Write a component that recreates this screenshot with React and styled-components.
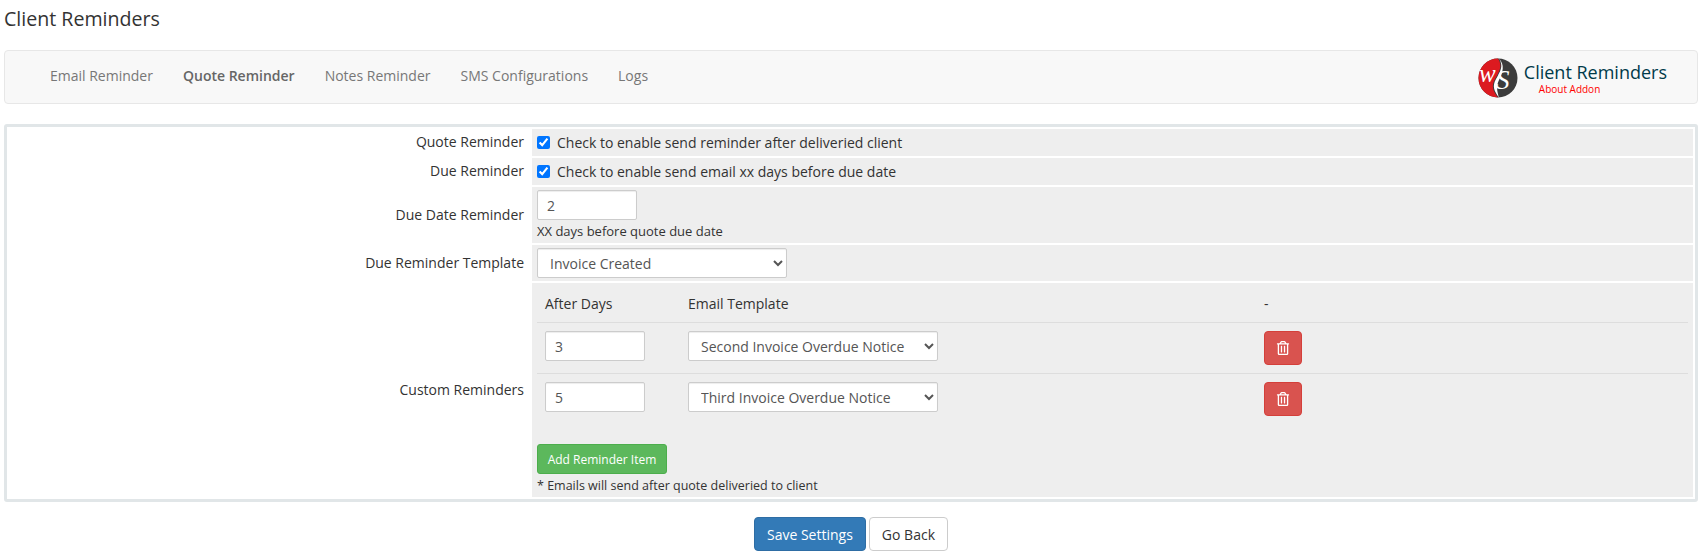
import React from "react"
import styled, { createGlobalStyle } from "styled-components"
import { FaRegTrashAlt } from "react-icons/fa"

const GlobalStyle = createGlobalStyle`
  html, body {
    margin: 0;
    padding: 0;
    background: #fff;
    font-family: "Open Sans", "Liberation Sans", sans-serif;
    font-size: 14px;
    color: #333;
  }
  * { box-sizing: border-box; }
`

const Page = styled.div`
  padding: 0 4px;
`

const Title = styled.h1`
  margin: 0;
  padding-top: 5px;
  height: 50px;
  font-size: 19.6px;
  line-height: 28px;
  font-weight: 400;
  color: #333;
`

const Navbar = styled.div`
  display: flex;
  align-items: center;
  justify-content: space-between;
  height: 54px;
  padding: 0 30px;
  background: #f8f8f8;
  border: 1px solid #e7e7e7;
  border-radius: 4px;
`

const NavList = styled.div`
  display: flex;
  padding-bottom: 2px;
`

const NavItem = styled.a`
  padding: 0 15px;
  font-size: 14px;
  line-height: 20px;
  color: ${p => (p.$active ? "#666" : "#777")};
  font-weight: ${p => (p.$active ? 600 : 400)};
`

const Brand = styled.div`
  display: flex;
  align-items: center;
  gap: 6px;
  padding-top: 1px;
`

const BrandText = styled.div`
  display: flex;
  flex-direction: column;
  padding-bottom: 1px;
`

const BrandName = styled.span`
  margin-bottom: 1px;
  font-size: 18px;
  line-height: 22px;
  color: #003b4a;
`

const BrandLink = styled.span`
  margin-left: 15px;
  font-size: 10px;
  line-height: 10px;
  color: #f00;
`

const Panel = styled.div`
  display: flex;
  flex-direction: column;
  gap: 2px;
  margin-top: 20px;
  padding: 2px;
  border: 3px solid #e1e6e8;
  border-radius: 3px;
`

const Row = styled.div`
  display: grid;
  grid-template-columns: 523px 1fr;
`

const Label = styled.div`
  display: flex;
  align-items: center;
  justify-content: flex-end;
  padding: 0 8px 2px 0;
  font-size: 14px;
  color: #333;
`

const Field = styled.div`
  background: #eee;
  padding: 3px 5px;
`

const CheckLine = styled.label`
  display: flex;
  align-items: center;
  gap: 7px;
  height: 21px;
  font-size: 14px;
  color: #333;
`

const Check = styled.input`
  margin: 0;
  width: 13px;
  height: 13px;
`

const Input = styled.input`
  display: block;
  width: ${p => p.$w}px;
  height: 30px;
  padding: 0 9px;
  font-family: inherit;
  font-size: 14px;
  color: #555;
  background: #fff;
  border: 1px solid #ccc;
  border-radius: 2px;
  box-shadow: inset 0 1px 1px rgba(0, 0, 0, 0.075);
`

const Select = styled.select`
  display: block;
  width: ${p => p.$w}px;
  height: 30px;
  padding: 0 8px;
  font-family: inherit;
  font-size: 14px;
  color: #555;
  background: #fff;
  border: 1px solid #ccc;
  border-radius: 2px;
  box-shadow: inset 0 1px 1px rgba(0, 0, 0, 0.075);
`

const Help = styled.div`
  margin: 4px 0 1px;
  font-size: ${p => p.$size}px;
  line-height: 15px;
  color: #333;
`

const Table = styled.div`
  display: grid;
  grid-template-columns: 143px 576px 1fr;
`

const Cell = styled.div`
  padding: 8px;
  border-top: ${p => (p.$head ? "none" : "1px solid #ddd")};
  font-size: 14px;
  line-height: 20px;
  color: #333;
`

const DeleteButton = styled.button`
  display: flex;
  align-items: center;
  justify-content: center;
  width: 38px;
  height: 34px;
  padding: 0;
  color: #fff;
  background: #d9534f;
  border: 1px solid #d43f3a;
  border-radius: 4px;
  font-size: 14px;
`

const AddButton = styled.button`
  display: block;
  margin-top: 20px;
  width: 130px;
  height: 30px;
  padding: 0;
  font-family: inherit;
  font-size: 12px;
  color: #fff;
  background: #5cb85c;
  border: 1px solid #4cae4c;
  border-radius: 3px;
`

const Actions = styled.div`
  display: flex;
  justify-content: center;
  gap: 3px;
  margin-top: 15px;
`

const Button = styled.button`
  height: 34px;
  padding: 0 12px;
  font-family: inherit;
  font-size: 14px;
  border-radius: 4px;
  color: ${p => (p.$primary ? "#fff" : "#333")};
  background: ${p => (p.$primary ? "#337ab7" : "#fff")};
  border: 1px solid ${p => (p.$primary ? "#2e6da4" : "#ccc")};
`

const Logo = () => (
  <svg width="40" height="40" viewBox="0 0 40 40">
    <circle cx="20" cy="20" r="19.5" fill="#3c3c3c" />
    <path d="M20 .5A19.5 19.5 0 0 0 20 39.5C15 33 13 28 17 21C21 14 25 8 20 .5Z" fill="#dc1a20" />
    <path d="M21 .5C26 8 22 14 18 21C14 28 16 33 21 39.5C19 33 18 28 21 22C25 14 27 7 21 .5Z" fill="#fff" />
    <text x="1" y="24" fontFamily="Liberation Serif, serif" fontStyle="italic" fontSize="25" fill="#fff">w</text>
    <text x="18" y="31" fontFamily="Liberation Serif, serif" fontStyle="italic" fontSize="27" fill="#fff">S</text>
  </svg>
)

const reminders = [
  { days: "3", template: "Second Invoice Overdue Notice" },
  { days: "5", template: "Third Invoice Overdue Notice" },
]

export default function App() {
  return (
    <Page>
      <GlobalStyle />
      <Title>Client Reminders</Title>
      <Navbar>
        <NavList>
          <NavItem>Email Reminder</NavItem>
          <NavItem $active>Quote Reminder</NavItem>
          <NavItem>Notes Reminder</NavItem>
          <NavItem>SMS Configurations</NavItem>
          <NavItem>Logs</NavItem>
        </NavList>
        <Brand>
          <Logo />
          <BrandText>
            <BrandName>Client Reminders</BrandName>
            <BrandLink>About Addon</BrandLink>
          </BrandText>
        </Brand>
      </Navbar>
      <Panel>
        <Row>
          <Label>Quote Reminder</Label>
          <Field>
            <CheckLine><Check type="checkbox" defaultChecked />Check to enable send reminder after deliveried client</CheckLine>
          </Field>
        </Row>
        <Row>
          <Label>Due Reminder</Label>
          <Field>
            <CheckLine><Check type="checkbox" defaultChecked />Check to enable send email xx days before due date</CheckLine>
          </Field>
        </Row>
        <Row>
          <Label>Due Date Reminder</Label>
          <Field>
            <Input $w={100} defaultValue="2" />
            <Help $size={13}>XX days before quote due date</Help>
          </Field>
        </Row>
        <Row>
          <Label>Due Reminder Template</Label>
          <Field>
            <Select $w={250} defaultValue="Invoice Created">
              <option>Invoice Created</option>
            </Select>
          </Field>
        </Row>
        <Row>
          <Label>Custom Reminders</Label>
          <Field>
            <Table>
              <Cell $head>After Days</Cell>
              <Cell $head>Email Template</Cell>
              <Cell $head>-</Cell>
              {reminders.map(r => (
                <React.Fragment key={r.days}>
                  <Cell><Input $w={100} defaultValue={r.days} /></Cell>
                  <Cell>
                    <Select $w={250} defaultValue={r.template}>
                      <option>{r.template}</option>
                    </Select>
                  </Cell>
                  <Cell><DeleteButton><FaRegTrashAlt /></DeleteButton></Cell>
                </React.Fragment>
              ))}
            </Table>
            <AddButton>Add Reminder Item</AddButton>
            <Help $size={12.5}>* Emails will send after quote deliveried to client</Help>
          </Field>
        </Row>
      </Panel>
      <Actions>
        <Button $primary>Save Settings</Button>
        <Button>Go Back</Button>
      </Actions>
    </Page>
  )
}
